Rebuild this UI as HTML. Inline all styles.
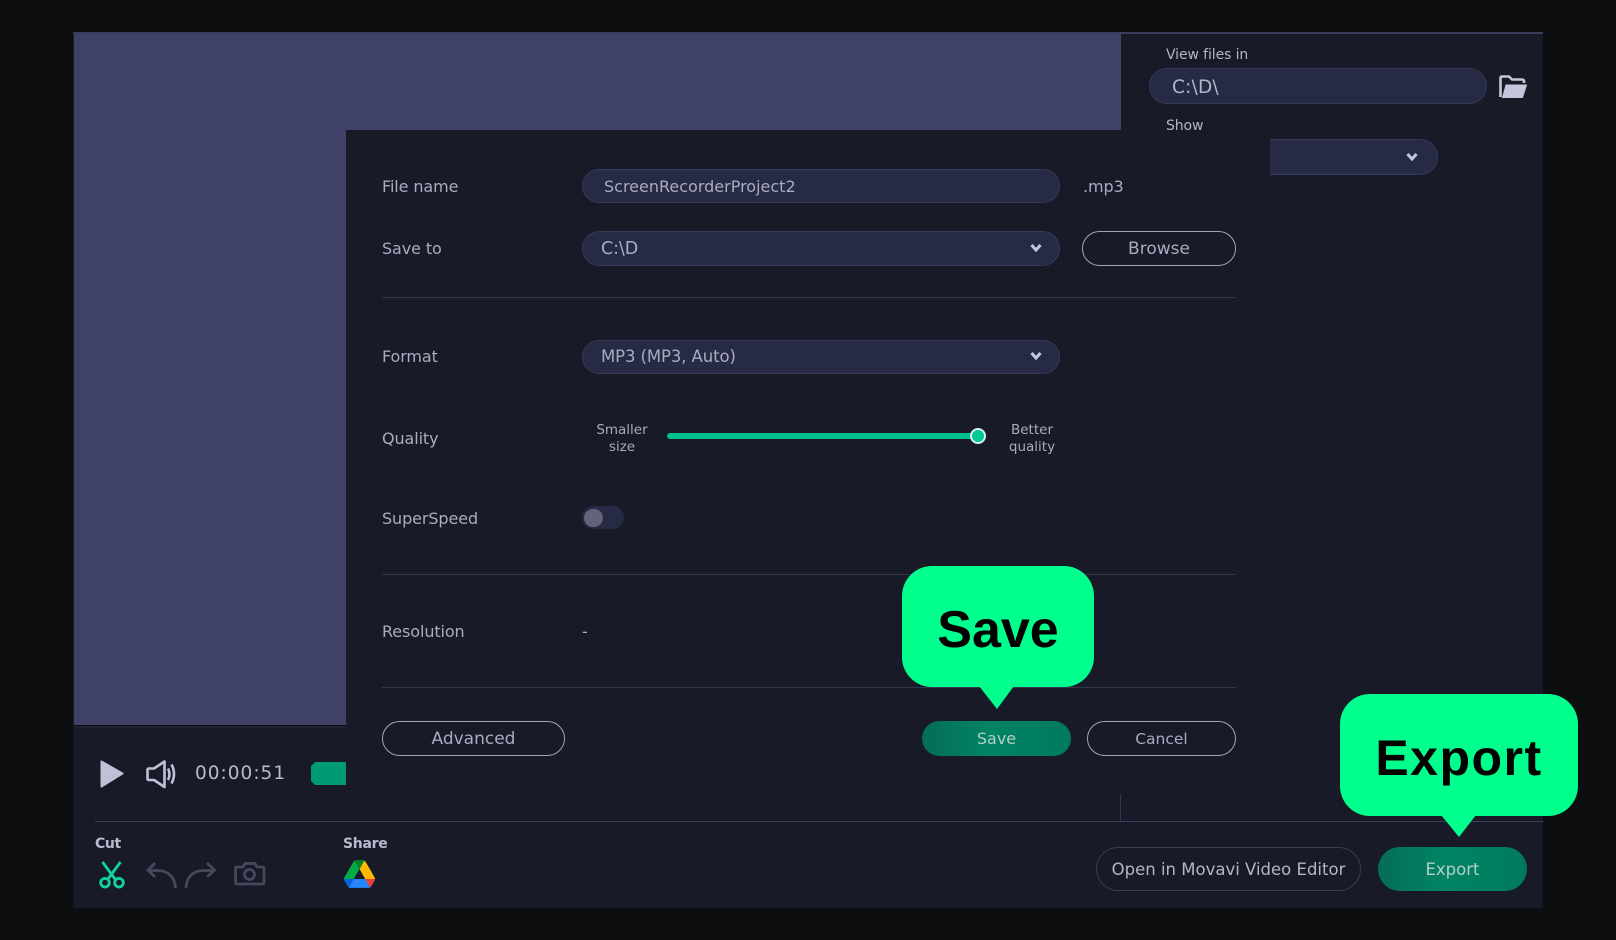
<!DOCTYPE html>
<html><head><meta charset="utf-8"><style>
html,body{margin:0;padding:0;width:1616px;height:940px;overflow:hidden;background:#0d0e10}
div,span{position:absolute;box-sizing:border-box}
body{font-family:"DejaVu Sans","Liberation Sans",sans-serif;color:#a9abc0;font-size:16px}
.t{white-space:nowrap;line-height:20px;height:20px;letter-spacing:-.1px}
.in{background:#272a45;border:1.5px solid #363957;border-radius:18px}
.btn{border:1.5px solid #a3a4b4;border-radius:18px;text-align:center;line-height:35px;color:#a9abc0;background:#181a28;font-size:17px}
.div{height:1px;background:#33364f;left:382px;width:854px}
.g{background:linear-gradient(90deg,#066c58,#008463 45%,#007a5f);border-radius:22px;text-align:center;color:#b8cfc8}
.bub{background:#00ff8c;color:#000;font-family:"Liberation Sans",sans-serif;font-weight:700;text-align:center}
svg{position:absolute;overflow:visible}
</style></head><body>
<div style="left:0;top:0;width:1616px;height:940px;filter:blur(.3px)">
<div style="left:73px;top:32px;width:1470px;height:876px;background:#181a28"></div>
<div style="left:73px;top:32px;width:1470px;height:2px;background:#3a3c5e"></div>
<div style="left:74px;top:34px;width:1047px;height:691px;background:#3f4166"></div>
<div style="left:74px;top:725px;width:272px;height:1px;background:#0f1018"></div>
<div style="left:74px;top:726px;width:272px;height:2px;background:#1e2133"></div>

<div class="t" style="left:1166px;top:45px;color:#b3b5c9;font-size:14px">View files in</div>
<div class="in" style="left:1149px;top:68px;width:338px;height:36px"></div>
<div class="t" style="left:1172px;top:78px;font-size:18.5px;letter-spacing:.2px;color:#b3b5c9">C:\D\</div>
<svg style="left:1499px;top:75px" width="29" height="24" viewBox="0 0 29 24"><path d="M1.5 22V3Q1.5 1.500 3 1.500H10L13 4.500H23Q25 4.500 25 6.500V8" fill="none" stroke="#c4c6dc" stroke-width="2.6" stroke-linejoin="round"/><path d="M7 10H27.500L23.500 22.500H3.500Z" fill="#c4c6dc" stroke="#c4c6dc" stroke-linejoin="round"/></svg>
<div class="t" style="left:1166px;top:116px;color:#b3b5c9;font-size:14px">Show</div>
<div style="left:1200px;top:139px;width:238px;height:36px;background:#272a45;border:1.5px solid #363957;border-radius:18px"></div>
<svg style="left:1405px;top:152px" width="14" height="10" viewBox="0 0 14 10"><path d="M2.500 2l4.500 5 4.500-5" fill="none" stroke="#c4c6dc" stroke-width="3"/></svg>

<!-- dialog -->
<div style="left:346px;top:130px;width:924px;height:670px;background:#181a28"></div>
<div class="t" style="left:382px;top:177px">File name</div>
<div class="in" style="left:582px;top:169px;width:478px;height:34px"></div>
<div class="t" style="left:604px;top:177px;letter-spacing:0">ScreenRecorderProject2</div>
<div class="t" style="left:1083px;top:177px">.mp3</div>
<div class="t" style="left:382px;top:239px">Save to</div>
<div class="in" style="left:582px;top:231px;width:478px;height:35px"></div>
<div class="t" style="left:601px;top:239px;font-size:17.5px">C:\D</div>
<svg style="left:1029px;top:243px" width="14" height="10" viewBox="0 0 14 10"><path d="M2.500 2l4.500 5 4.500-5" fill="none" stroke="#c4c6dc" stroke-width="3"/></svg>
<div class="btn" style="left:1082px;top:231px;width:154px;height:35px">Browse</div>
<div class="div" style="top:297px"></div>
<div class="t" style="left:382px;top:347px">Format</div>
<div class="in" style="left:582px;top:340px;width:478px;height:34px"></div>
<div class="t" style="left:601px;top:347px;font-size:16.5px">MP3 (MP3, Auto)</div>
<svg style="left:1029px;top:351px" width="14" height="10" viewBox="0 0 14 10"><path d="M2.500 2l4.500 5 4.500-5" fill="none" stroke="#c4c6dc" stroke-width="3"/></svg>
<div class="t" style="left:382px;top:429px">Quality</div>
<div style="left:582px;top:422px;width:80px;text-align:center;font-size:13.5px;line-height:17px;color:#a9abc0">Smaller<br>size</div>
<div style="left:667px;top:433px;width:311px;height:6px;border-radius:3px;background:#00c08f"></div>
<div style="left:970px;top:428px;width:16px;height:16px;border-radius:8px;background:#00c896;border:2.5px solid #d6f3ea"></div>
<div style="left:992px;top:422px;width:80px;text-align:center;font-size:13.5px;line-height:17px;color:#a9abc0">Better<br>quality</div>
<div class="t" style="left:382px;top:509px">SuperSpeed</div>
<div style="left:582px;top:506px;width:42px;height:23px;border-radius:12px;background:#272a45"></div>
<div style="left:584px;top:509px;width:19px;height:18px;border-radius:10px;background:#62647a"></div>
<div class="div" style="top:574px"></div>
<div class="t" style="left:382px;top:622px">Resolution</div>
<div class="t" style="left:582px;top:622px">-</div>
<div class="div" style="top:687px"></div>
<div class="btn" style="left:382px;top:721px;width:183px;height:35px">Advanced</div>
<div class="g" style="left:922px;top:721px;width:149px;height:35px;line-height:36px;border-radius:18px">Save</div>
<div class="btn" style="left:1087px;top:721px;width:149px;height:35px;font-size:15.5px;line-height:34px">Cancel</div>

<!-- transport -->
<svg style="left:100px;top:760px" width="24" height="28" viewBox="0 0 24 28"><path d="M1.500 1.500L22.500 13.500L1.500 26.500Z" fill="#bfc1d8" stroke="#bfc1d8" stroke-linejoin="round" stroke-width="2"/></svg>
<svg style="left:146px;top:760px" width="32" height="29" viewBox="0 0 32 29" fill="none" stroke="#bfc1d8" stroke-width="2.6" stroke-linejoin="round"><path d="M1.500 10Q1.500 8.500 3 8.500H8L18.500 1.500V27L8 20H3Q1.500 20 1.500 18.500Z"/><path d="M22 8.500Q25 14 22 20M25.500 4.500Q30.500 14 25.500 23.500"/></svg>
<div class="t" style="left:195px;top:764px;font-size:18.5px;letter-spacing:1px;color:#b8bace">00:00:51</div>
<svg style="left:311px;top:762px" width="35" height="23" viewBox="0 0 35 23"><path d="M4 0H35V23H4L0 19V4Z" fill="#009a75"/></svg>

<!-- bottom -->
<div style="left:1120px;top:794px;width:1px;height:27px;background:#33364f"></div>
<div style="left:95px;top:821px;width:1448px;height:1px;background:#3d3f60"></div>
<div class="t" style="left:95px;top:834px;font-size:14px;font-weight:700;color:#b8bace;letter-spacing:-.4px">Cut</div>
<div class="t" style="left:343px;top:834px;font-size:14px;font-weight:700;color:#b8bace;letter-spacing:-.3px">Share</div>
<svg style="left:99px;top:861px" width="26" height="28" viewBox="0 0 26 28" fill="none" stroke="#0fd59c" stroke-width="2.8"><path d="M3.500 1L16 18M21.500 1L9 18"/><circle cx="6" cy="21.700" r="4.300"/><circle cx="20" cy="21.700" r="4.300"/></svg>
<svg style="left:146px;top:861px" width="32" height="28" viewBox="0 0 32 28" fill="none" stroke="#46485d" stroke-width="2.8"><path d="M9 2L2 9L9 16M2 9.500H11C22 9.500 29 16 29.500 27"/></svg>
<svg style="left:184px;top:861px" width="32" height="28" viewBox="0 0 32 28" fill="none" stroke="#46485d" stroke-width="2.8"><path d="M23 2L30.500 9L23 16M30.500 9.500H20C9 9.500 2.500 16 2 27"/></svg>
<svg style="left:234px;top:862px" width="32" height="24" viewBox="0 0 32 24" fill="none" stroke="#46485d" stroke-width="2.8" stroke-linejoin="round"><path d="M3 5H9L11 1.500H21L23 5H28.500Q30 5 30 6.500V20.500Q30 22 28.500 22H3Q1.500 22 1.500 20.500V6.500Q1.500 5 3 5Z"/><circle cx="15.500" cy="12.500" r="5"/></svg>
<svg style="left:344px;top:860px" width="31" height="28" viewBox="0 0 87.3 78"><path d="m6.6 66.85 3.85 6.65c.8 1.4 1.95 2.5 3.3 3.3l13.75-23.8h-27.5c0 1.55.4 3.1 1.2 4.5z" fill="#0066da"/><path d="m43.65 25-13.75-23.8c-1.35.8-2.5 1.9-3.3 3.3l-25.4 44a9.06 9.06 0 0 0 -1.2 4.5h27.5z" fill="#00ac47"/><path d="m73.55 76.8c1.35-.8 2.5-1.9 3.3-3.3l1.6-2.75 7.65-13.25c.8-1.4 1.2-2.95 1.2-4.5h-27.502l5.852 11.5z" fill="#ea4335"/><path d="m43.65 25 13.75-23.8c-1.35-.8-2.9-1.2-4.5-1.2h-18.5c-1.6 0-3.15.45-4.5 1.2z" fill="#00832d"/><path d="m59.8 53h-32.3l-13.75 23.8c1.35.8 2.9 1.2 4.5 1.2h50.8c1.6 0 3.15-.45 4.5-1.2z" fill="#2684fc"/><path d="m73.4 26.5-12.7-22c-.8-1.4-1.95-2.5-3.3-3.3l-13.75 23.8 16.15 28h27.45c0-1.55-.4-3.1-1.2-4.5z" fill="#ffba00"/></svg>
<div style="left:1096px;top:847px;width:265px;height:44px;border:1.5px solid #3a3c58;border-radius:22px;text-align:center;line-height:44px;font-size:16.5px;color:#b3b5c9;white-space:nowrap">Open in Movavi Video Editor</div>
<div class="g" style="left:1378px;top:847px;width:149px;height:44px;line-height:45px;font-size:16.5px">Export</div>

<!-- bubbles -->
<svg style="left:979px;top:686px" width="35" height="24" viewBox="0 0 35 24"><path d="M0 0H35L18 23Z" fill="#00ff8c"/></svg>
<div class="bub" style="left:902px;top:566px;width:192px;height:121px;border-radius:30px;font-size:52px;line-height:129px">Save</div>
<svg style="left:1441px;top:815px" width="35" height="23" viewBox="0 0 35 23"><path d="M0 0H35L18 22Z" fill="#00ff8c"/></svg>
<div class="bub" style="left:1340px;top:694px;width:238px;height:122px;border-radius:30px;font-size:50px;line-height:129px;letter-spacing:1.5px">Export</div>
</div>
</body></html>
